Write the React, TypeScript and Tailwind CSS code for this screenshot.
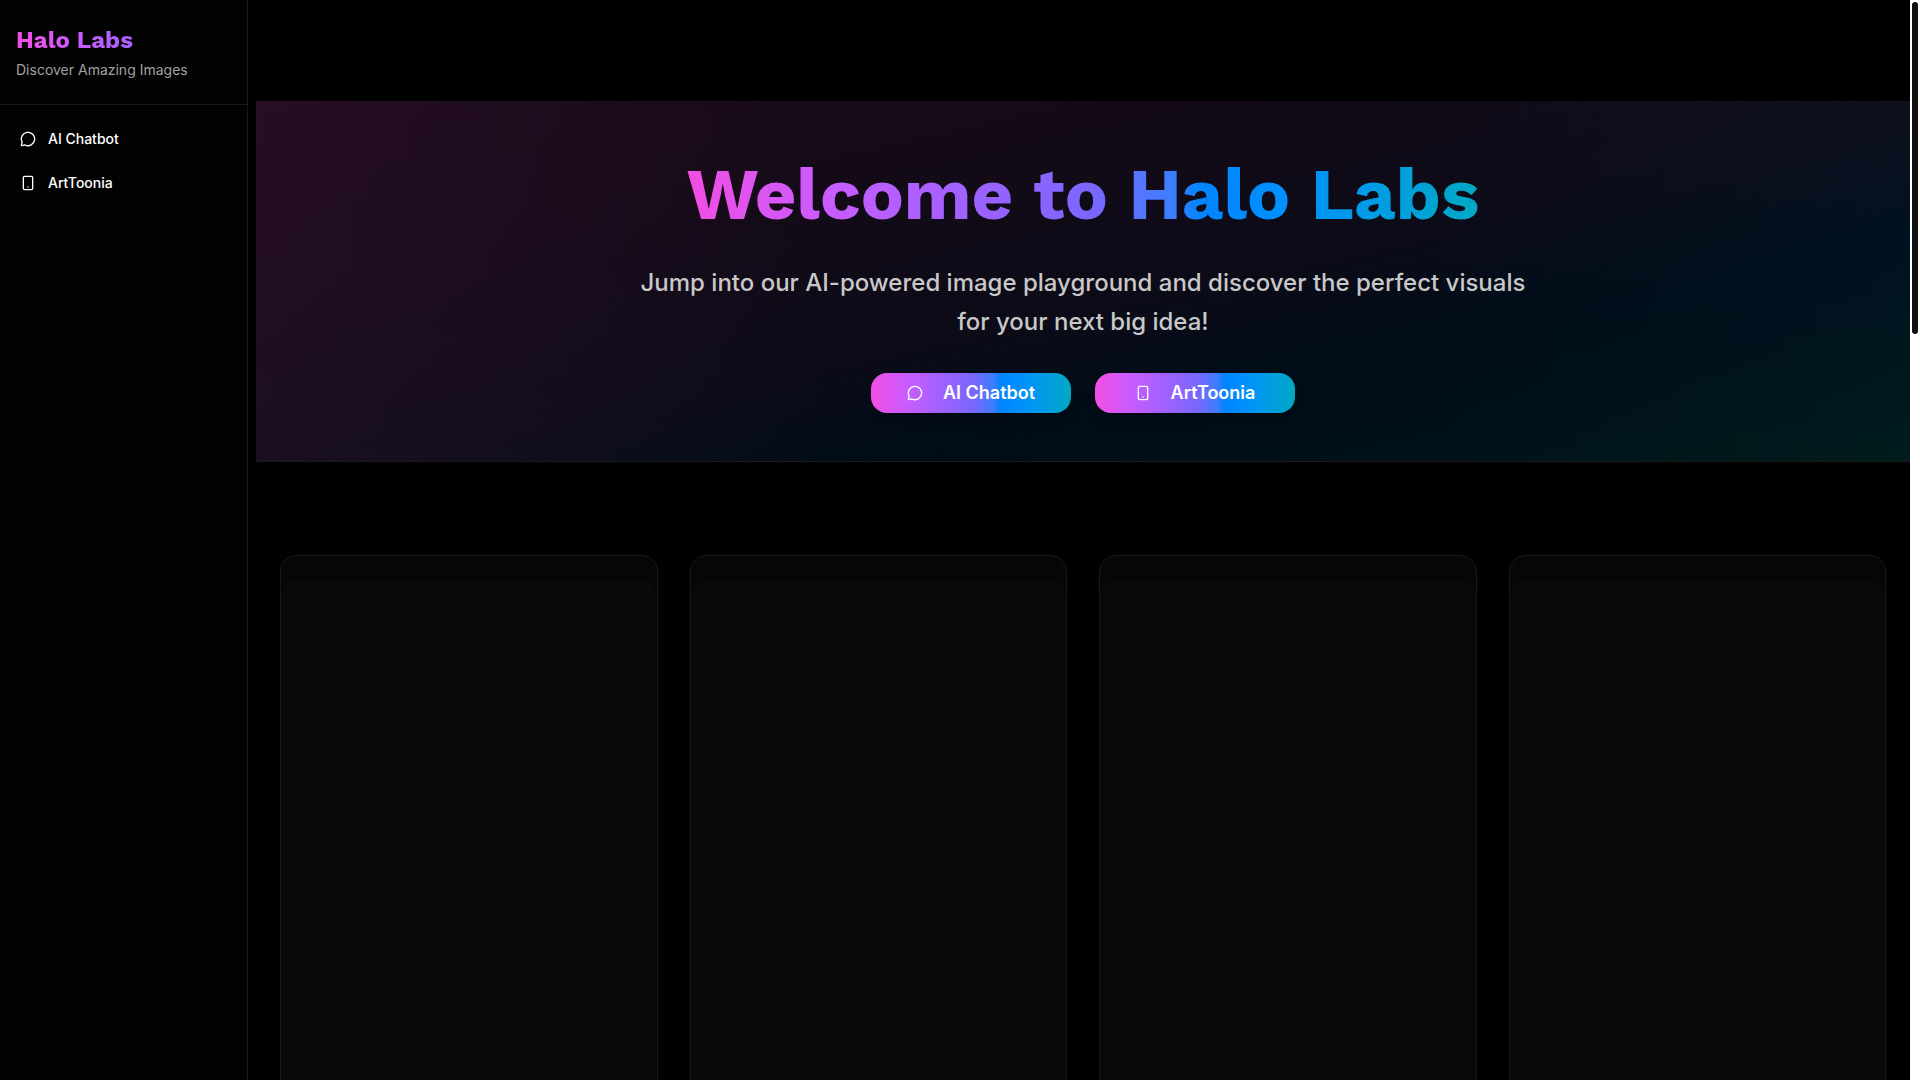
import { MessageCircle, Smartphone } from 'lucide-react';
import type { LucideIcon } from 'lucide-react';

interface Tool {
    id: string;
    label: string;
    href: string;
    icon: LucideIcon;
}

const tools: Tool[] = [
    { id: 'chatbot', label: 'AI Chatbot', href: '#chatbot', icon: MessageCircle },
    { id: 'arttoonia', label: 'ArtToonia', href: '#arttoonia', icon: Smartphone },
];

const placeholders = [1, 2, 3, 4];

const brandGradient =
    'bg-[linear-gradient(90deg,#f24ee2_0%,#c85cff_18%,#7a66ff_51%,#3f7dff_61%,#0084ff_65%,#0090ff_75%,#00a9c4_100%)]';

function Sidebar() {
    return (
        <aside className="w-62 shrink-0 border-r border-[#1a1a1a] bg-[#020202]">
            <div className="px-4 py-6 border-b border-[#1a1a1a]">
                <h2
                    className={`font-['Work_Sans',Inter,sans-serif] text-2xl font-bold text-transparent bg-clip-text bg-size-[170%_100%] ${brandGradient}`}
                >
                    Halo Labs
                </h2>
                <p className="mt-1 text-sm text-[#a1a1a1]">Discover Amazing Images</p>
            </div>
            <nav className="flex flex-col gap-2 p-2 pt-4">
                {tools.map(({ id, label, href, icon: Icon }) => (
                    <a
                        key={id}
                        href={href}
                        className="flex h-9 items-center gap-3 rounded-lg px-3 text-sm font-medium text-white hover:bg-white/5"
                    >
                        <Icon className="size-4" />
                        {label}
                    </a>
                ))}
            </nav>
        </aside>
    );
}

function Hero() {
    return (
        <section className="border-b border-[#1a1a1a] py-12 text-center bg-[linear-gradient(90deg,#f24ee20f_0%,#f24ee200_35%,#008cc800_70%,#008cc80a_100%),linear-gradient(to_bottom_right,#1a0a18_0%,#140a17_28%,#0c0b18_54%,#000d18_69%,#000f18_78%,#001716_100%)]">
            <div className="mx-auto flex max-w-4xl flex-col items-center">
                <h1
                    className={`mb-6 whitespace-nowrap font-['Work_Sans',Inter,sans-serif] text-7xl leading-[90px] font-bold text-transparent bg-clip-text ${brandGradient}`}
                >
                    Welcome to Halo Labs
                </h1>
                <p className="mb-8 text-2xl leading-[39px] font-medium text-[#c8c8c8]">
                    Jump into our AI-powered image playground and discover the perfect visuals for your next big idea!
                </p>
                <div className="flex gap-6">
                    {tools.map(({ id, label, icon: Icon }) => (
                        <button
                            key={id}
                            type="button"
                            className={`flex h-10 w-50 items-center justify-center gap-5 rounded-2xl text-lg font-semibold text-white shadow-lg shadow-black/20 ${brandGradient}`}
                        >
                            <Icon className="size-4" />
                            {label}
                        </button>
                    ))}
                </div>
            </div>
        </section>
    );
}

export default function App() {
    return (
        <div className="flex h-screen overflow-hidden bg-black font-[Inter,sans-serif]">
            <Sidebar />
            <main className="min-w-0 flex-1 overflow-hidden pt-[101px] pl-2">
                <Hero />
                {/* 이미지 로딩 중 카드 */}
                <div className="mt-[93px] grid grid-cols-4 gap-8 px-6">
                    {placeholders.map((n) => (
                        <div
                            key={n}
                            className="h-screen overflow-hidden rounded-2xl border border-[#181818] bg-[#060606] pt-6"
                        >
                            <div className="h-full rounded-2xl bg-[#090909]" />
                        </div>
                    ))}
                </div>
            </main>
            {/* 스크롤바 */}
            <div className="w-[10px] shrink-0 bg-white p-0.5">
                <div className="h-[332px] rounded-full bg-[#111111]" />
            </div>
        </div>
    );
}
